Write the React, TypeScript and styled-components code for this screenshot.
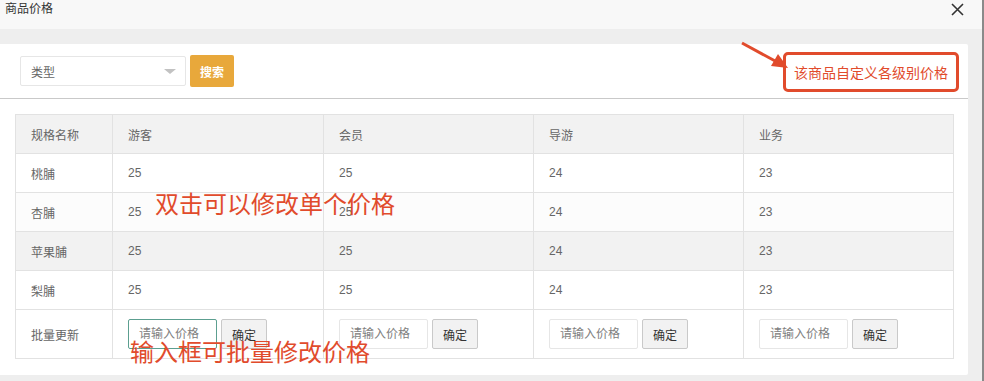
import React from 'react';
import styled, { createGlobalStyle } from 'styled-components';

const GlobalStyle = createGlobalStyle`
  html, body {
    margin: 0;
    padding: 0;
    overflow: hidden;
  }
  body {
    font-family: "Liberation Sans", "Noto Sans CJK SC", sans-serif;
  }
`;

const RED = '#e14b2c';

export const SPage = styled.div`
  position: relative;
  width: 984px;
  height: 381px;
  box-sizing: border-box;
  display: flex;
  flex-direction: column;
  background: #eeeeee;
  border-right: 2px solid #8a8a8a;
`;

export const SHeader = styled.div`
  height: 29px;
  flex: none;
  display: flex;
  align-items: flex-start;
  justify-content: space-between;
  padding: 1px 18px 0 5px;
  box-sizing: border-box;
  background: #f8f8f8;
`;

export const STitle = styled.div`
  font-size: 12px;
  line-height: 16px;
  color: #333;
`;

export const SBody = styled.div`
  flex: 1;
  padding: 15px 14px 6px 0;
  display: flex;
  flex-direction: column;
`;

export const SCard = styled.div`
  flex: 1;
  background: #fff;
  border-radius: 0 2px 2px 0;
  display: flex;
  flex-direction: column;
`;

export const SToolbar = styled.div`
  height: 54px;
  display: flex;
  align-items: center;
  gap: 4px;
  padding-left: 20px;
  border-bottom: 1px solid #c9c9c9;
`;

export const SSelect = styled.div`
  width: 166px;
  height: 30px;
  box-sizing: border-box;
  border: 1px solid #e6e6e6;
  border-radius: 2px;
  display: flex;
  align-items: center;
  justify-content: space-between;
  padding: 0 9px 0 10px;
  font-size: 12px;
  color: #666;
`;

export const SCaret = styled.span`
  width: 0;
  height: 0;
  border-left: 6px solid transparent;
  border-right: 6px solid transparent;
  border-top: 5px solid #c2c2c2;
`;

export const SSearch = styled.button`
  width: 44px;
  height: 32px;
  border: none;
  border-radius: 2px;
  background: #e8a83b;
  color: #fff;
  font-family: inherit;
  font-size: 12px;
  font-weight: bold;
  padding: 0;
`;

export const STableWrap = styled.div`
  padding: 15px 15px 15px 15px;
`;

export const STable = styled.table`
  width: 938px;
  border-collapse: collapse;
  table-layout: fixed;
  font-size: 12px;
  color: #666;
`;

export const SRow = styled.tr<{ $bg?: string; $h?: number }>`
  background: ${({ $bg }) => $bg || '#fff'};
  height: ${({ $h }) => $h || 39}px;
`;

export const SCell = styled.td`
  border: 1px solid #e2e2e2;
  padding: 0 15px;
  text-align: left;
  font-weight: normal;
  white-space: nowrap;
`;

export const SBatch = styled.div`
  display: flex;
  gap: 4px;
  align-items: center;
`;

export const SInput = styled.input<{ $focus?: boolean }>`
  width: 89px;
  height: 30px;
  box-sizing: border-box;
  border: 1px solid ${({ $focus }) => ($focus ? '#5c9f90' : '#e6e6e6')};
  border-radius: 2px;
  padding: 0 10px;
  font-family: inherit;
  font-size: 12px;
  outline: none;
  &::placeholder {
    color: #808080;
  }
`;

export const SConfirm = styled.button`
  width: 46px;
  height: 30px;
  box-sizing: border-box;
  border: 1px solid #c9c9c9;
  border-radius: 2px;
  background: #f2f2f2;
  color: #333;
  font-family: inherit;
  font-size: 12px;
  padding: 0;
`;

export const SNote = styled.div<{ $x: number; $y: number }>`
  position: absolute;
  left: ${({ $x }) => $x}px;
  top: ${({ $y }) => $y}px;
  font-size: 24px;
  line-height: 28px;
  color: ${RED};
  white-space: nowrap;
`;

export const SCallout = styled.div`
  position: absolute;
  left: 783px;
  top: 52px;
  width: 176px;
  height: 40px;
  box-sizing: border-box;
  border: 3px solid ${RED};
  border-radius: 5px;
  background: #fff;
  display: flex;
  align-items: center;
  justify-content: center;
  font-size: 14px;
  color: ${RED};
`;

export const SArrow = styled.svg`
  position: absolute;
  left: 0;
  top: 0;
  pointer-events: none;
`;

const groups = ['游客', '会员', '导游', '业务'];

const rows = [
  { name: '桃脯', prices: [25, 25, 24, 23], bg: '#fff' },
  { name: '杏脯', prices: [25, 25, 24, 23], bg: '#fcfcfc' },
  { name: '苹果脯', prices: [25, 25, 24, 23], bg: '#f2f2f2' },
  { name: '梨脯', prices: [25, 25, 24, 23], bg: '#fff' },
];

const CloseIcon = () => (
  <svg width="13" height="13" viewBox="0 0 13 13" style={{ marginTop: 2 }}>
    <path d="M1 1 L12 12 M12 1 L1 12" stroke="#333" strokeWidth="1.6" fill="none" />
  </svg>
);

export default function App() {
  return (
    <>
      <GlobalStyle />
      <SPage>
        <SHeader>
          <STitle>商品价格</STitle>
          <CloseIcon />
        </SHeader>
        <SBody>
          <SCard>
            <SToolbar>
              <SSelect>
                类型
                <SCaret />
              </SSelect>
              <SSearch>搜索</SSearch>
            </SToolbar>
            <STableWrap>
              <STable>
                <colgroup>
                  <col style={{ width: 97 }} />
                  <col style={{ width: 211 }} />
                  <col style={{ width: 210 }} />
                  <col style={{ width: 210 }} />
                  <col style={{ width: 210 }} />
                </colgroup>
                <thead>
                  <SRow $bg="#f2f2f2">
                    <SCell as="th">规格名称</SCell>
                    {groups.map((g) => (
                      <SCell as="th" key={g}>
                        {g}
                      </SCell>
                    ))}
                  </SRow>
                </thead>
                <tbody>
                  {rows.map((r) => (
                    <SRow key={r.name} $bg={r.bg}>
                      <SCell>{r.name}</SCell>
                      {r.prices.map((p, i) => (
                        <SCell key={i}>{p}</SCell>
                      ))}
                    </SRow>
                  ))}
                  <SRow $h={49}>
                    <SCell>批量更新</SCell>
                    {groups.map((g, i) => (
                      <SCell key={g}>
                        <SBatch>
                          <SInput placeholder="请输入价格" $focus={i === 0} />
                          <SConfirm>确定</SConfirm>
                        </SBatch>
                      </SCell>
                    ))}
                  </SRow>
                </tbody>
              </STable>
            </STableWrap>
          </SCard>
        </SBody>

        <SNote $x={155} $y={191}>双击可以修改单个价格</SNote>
        <SNote $x={130} $y={339}>输入框可批量修改价格</SNote>
        <SCallout>该商品自定义各级别价格</SCallout>
        <SArrow width="984" height="381">
          <line x1="742" y1="43" x2="777" y2="62" stroke={RED} strokeWidth="3" />
          <polygon points="788,68 771,66 778,54" fill={RED} />
        </SArrow>
      </SPage>
    </>
  );
}
